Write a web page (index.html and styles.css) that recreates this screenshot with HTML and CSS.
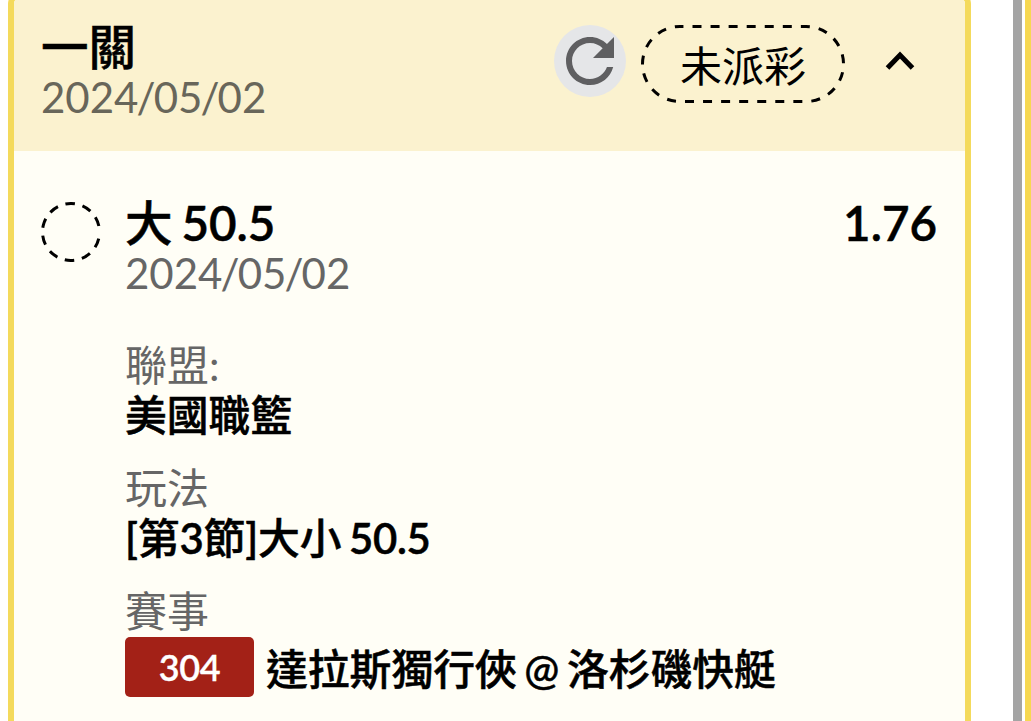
FILE: index.html
```html
<!DOCTYPE html>
<html lang="zh-Hant">
<head>
<meta charset="utf-8">
<title>投注紀錄</title>
<link rel="stylesheet" href="styles.css">
</head>
<body>
<div class="page">
  <div class="bet-card">
    <div class="bet-head">
      <div class="head-info">
        <div class="title">一關</div>
        <div class="date">2024<i>/</i>05<i>/</i>02</div>
      </div>
      <div class="refresh">
        <svg width="72" height="72" viewBox="0 0 24 24"><path fill="#5f5f61" d="M17.65 6.35C16.2 4.9 14.21 4 12 4c-4.42 0-7.99 3.58-7.99 8s3.57 8 7.99 8c3.73 0 6.84-2.55 7.73-6h-2.08c-.82 2.33-3.04 4-5.65 4-3.31 0-6-2.69-6-6s2.69-6 6-6c1.66 0 3.14.69 4.22 1.78L13 11h7V4l-2.35 2.35z"/></svg>
      </div>
      <div class="status">
        <svg class="status-line" width="204" height="78"><rect x="1.5" y="1.5" width="201" height="75" rx="37.5" fill="none" stroke="#000" stroke-width="3" stroke-dasharray="9 9.06" stroke-dashoffset="-12.5"/></svg>
        <span>未派彩</span>
      </div>
      <svg class="arrow" width="30" height="22" viewBox="0 0 30 22"><path d="M2.500 18L15 5l12.500 13" fill="none" stroke="#000" stroke-width="5"/></svg>
    </div>
    <div class="bet-body">
      <svg class="mark" width="60" height="60" viewBox="0 0 60 60"><circle cx="30" cy="30" r="28.5" transform="rotate(13.4 30 30)" fill="none" stroke="#000" stroke-width="3" stroke-dasharray="9.5 7.9 9.5 7.9 9.5 7.9 9.5 7.9 9.5 7.9 9.5 7.9 9.5 7.9 9.5 7.9 9.5 7.9 9.5 13"/></svg>
      <div class="detail">
        <div class="pick">
          <div class="title">大 <b>50.5</b></div>
          <div class="odds"><b>1.76</b></div>
        </div>
        <div class="date">2024<i>/</i>05<i>/</i>02</div>
        <dl>
          <dt>聯盟:</dt>
          <dd>美國職籃</dd>
          <dt>玩法</dt>
          <dd><b>[</b>第<b>3</b>節<b>]</b>大小 <b>50.5</b></dd>
          <dt>賽事</dt>
          <dd class="match"><b class="num">304</b><span>達拉斯獨行俠 @ 洛杉磯快艇</span></dd>
        </dl>
      </div>
    </div>
  </div>
  <div class="scrollbar"></div>
  <div class="side"></div>
</div>
</body>
</html>
```

FILE: styles.css
```css
body, dl, dd {
	margin:0;
	padding:0;
}
body {
	background:#fff;
	color:#000;
	font:42px/50px Lato, "Noto Sans CJK TC", sans-serif;
	overflow:hidden;
}
b {
	font-weight:600;
}
.page {
	display:flex;
	height:721px;
	overflow:hidden;
}
.bet-card {
	box-sizing:border-box;
	flex:none;
	width:963px;
	height:760px;
	margin:-9px 0 0 8px;
	border:6px solid #f4da5c;
	border-radius:13px;
	background:#fffef6;
	overflow:hidden;
}
.bet-head {
	display:flex;
	align-items:flex-start;
	box-sizing:border-box;
	height:154px;
	padding:28px 51px 0 27px;
	background:#fbf2cf;
}
.head-info {
	flex:1;
	margin-top:-3px;
}
.title, .odds {
	font-size:47.5px;
	font-weight:500;
	white-space:nowrap;
}
.title, .odds, dd {
	-webkit-text-stroke:.5px;
}
.title, dd {
	word-spacing:-3px;
}
.date, dt {
	color:#666;
}
.date i {
	margin:0 -1.9px;
	font-style:normal;
}
.bet-head .date {
	color:#68665a;
}
.refresh {
	width:72px;
	height:72px;
	border-radius:50%;
	background:#e5e6e8;
}
.refresh svg, .mark {
	display:block;
}
.status {
	position:relative;
	width:204px;
	height:78px;
	margin:0 39px 0 15px;
	line-height:83px;
	text-align:center;
}
.status-line {
	position:absolute;
	left:0;
	top:0;
}
.arrow {
	margin:25px -1px 0 1px;
}
.bet-body {
	display:flex;
	padding:47px 28px 0 27px;
}
.mark {
	flex:none;
	margin:4px 24px 0 0;
}
.detail {
	flex:1;
}
.pick {
	display:flex;
	justify-content:space-between;
}
dl {
	margin-top:42px;
}
dd {
	margin-bottom:23px;
	font-size:41.8px;
	font-weight:500;
}
dd b {
	letter-spacing:-.3px;
}
.match {
	display:flex;
	align-items:center;
	height:60px;
	padding-top:1px;
}
.match span {
	padding-top:3px;
}
.num {
	width:129px;
	height:60px;
	margin-right:12px;
	border-radius:5px;
	background:#a32117;
	color:#fff;
	font-size:36px;
	line-height:61px;
	text-align:center;
	-webkit-text-stroke:.3px;
}
.scrollbar {
	flex:none;
	width:9px;
	margin-left:42px;
	background:#a4a4a4;
}
.side {
	flex:none;
	width:6px;
	margin-left:3px;
	background:#f7d851;
}
```
